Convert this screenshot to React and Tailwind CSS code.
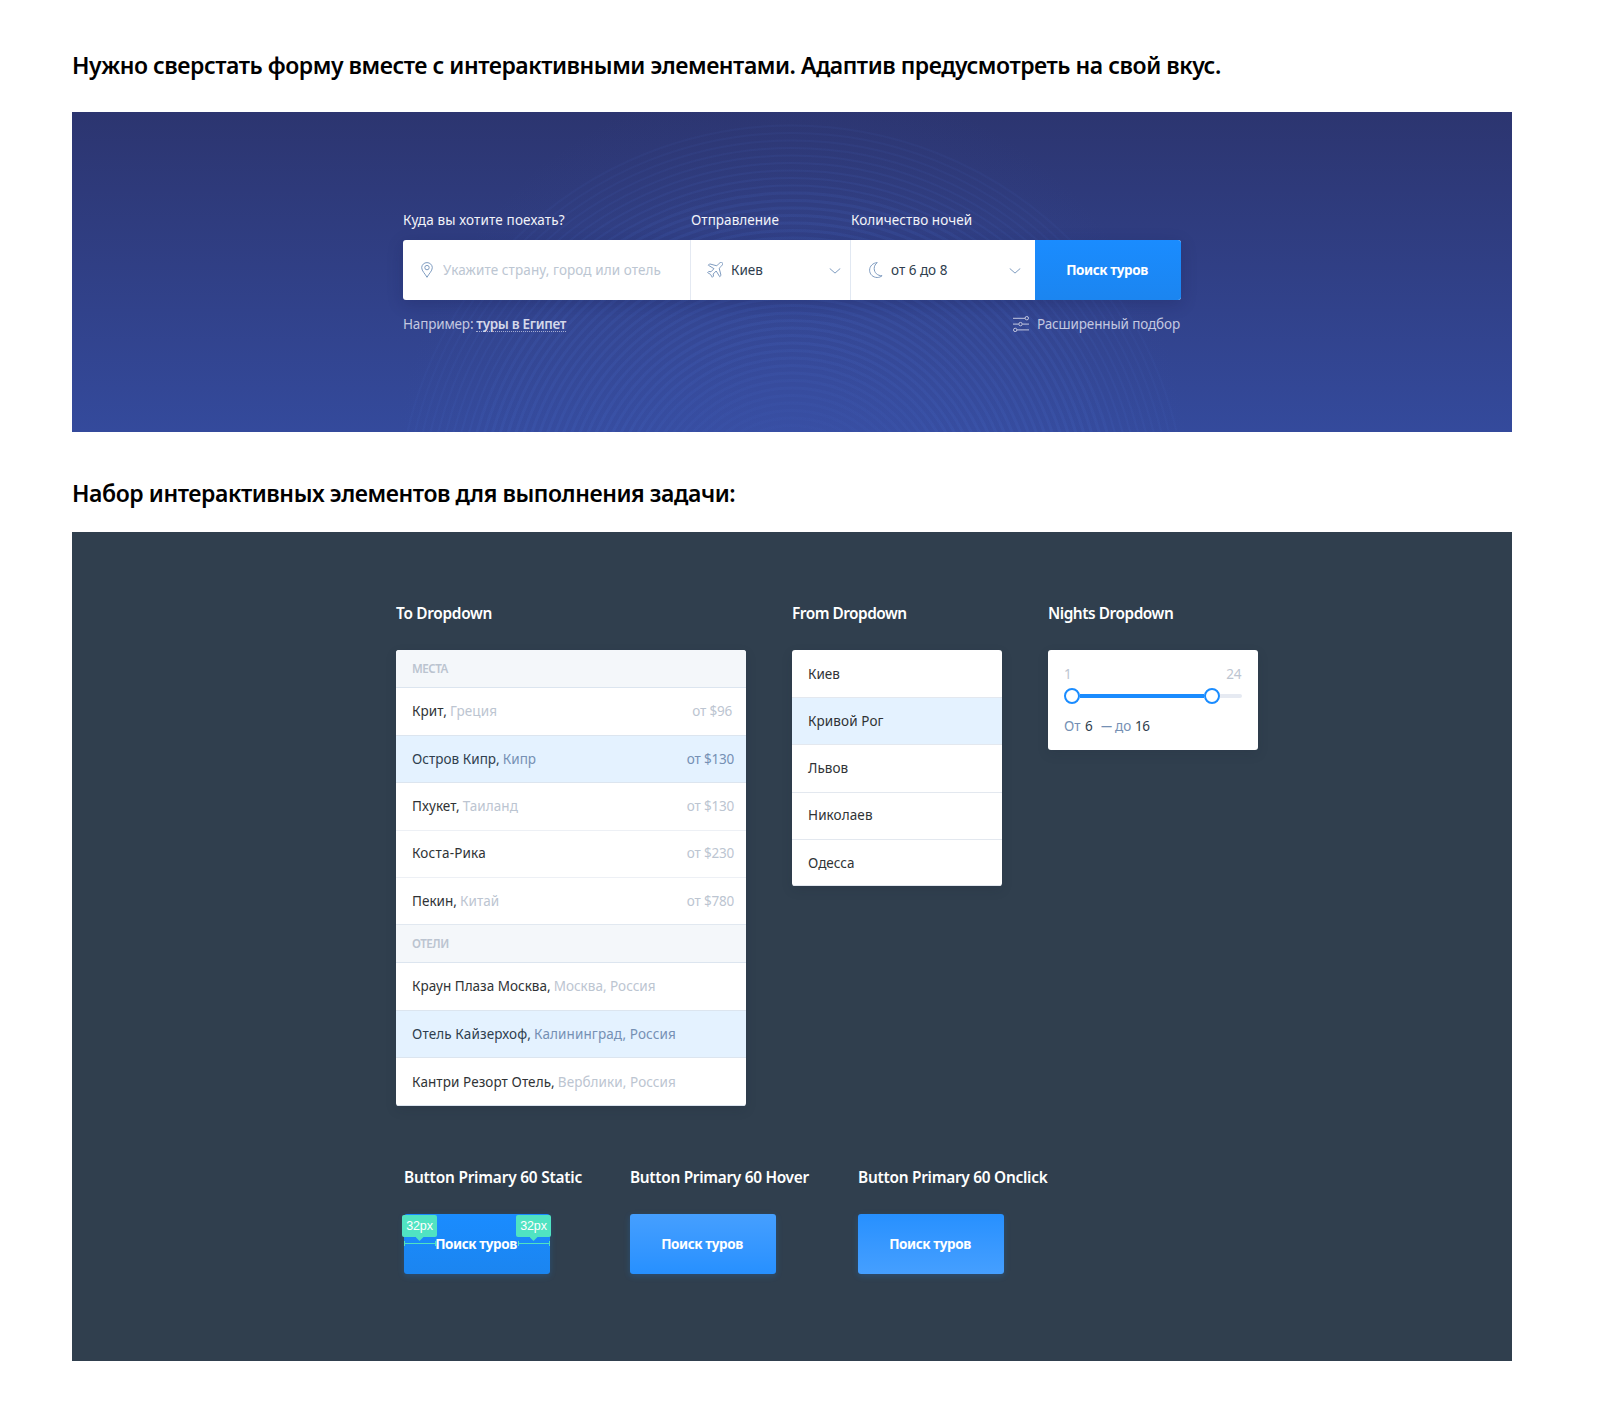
import clsx from "clsx";

const RINGS = Array.from({ length: 44 }, (_, i) => 72 + i * 7.5);

function Rings() {
  return (
    <svg className="absolute inset-0 h-full w-full" viewBox="0 0 1440 320" fill="none" aria-hidden="true">
      <defs>
        <radialGradient id="ringFade" gradientUnits="userSpaceOnUse" cx="720" cy="408" r="402">
          <stop offset="0.16" stopColor="#4a6fd0" stopOpacity="0" />
          <stop offset="0.45" stopColor="#4a6fd0" stopOpacity="0.14" />
          <stop offset="0.75" stopColor="#4a6fd0" stopOpacity="0.14" />
          <stop offset="1" stopColor="#4a6fd0" stopOpacity="0.06" />
        </radialGradient>
        <radialGradient id="glow" gradientUnits="userSpaceOnUse" cx="720" cy="360" r="400">
          <stop offset="0" stopColor="#4a63c4" stopOpacity="0.22" />
          <stop offset="1" stopColor="#4a63c4" stopOpacity="0" />
        </radialGradient>
      </defs>
      <rect width="1440" height="320" fill="url(#glow)" />
      {RINGS.map((r) => (
        <circle key={r} cx="720" cy="408" r={r} stroke="url(#ringFade)" strokeWidth={r > 330 ? 2 : 3} />
      ))}
    </svg>
  );
}

function PinIcon() {
  return (
    <svg className="h-4 w-3 shrink-0" viewBox="0 0 12 16" fill="none" stroke="#7f9cc0" strokeLinejoin="round">
      <path d="M6 15.3C4.3 12 .7 8.9.7 5.7a5.3 5.1 0 0 1 10.6 0c0 3.2-3.6 6.3-5.3 9.6z" />
      <circle cx="6" cy="5.6" r="2.2" />
    </svg>
  );
}

function PlaneIcon() {
  return (
    <svg className="size-4 shrink-0" viewBox="0 0 16 16" fill="none" stroke="#7f9cc0" strokeLinejoin="round">
      <path d="M15.3.7C14.5-.1 13 .5 12.2 1.3L9.8 3.8 2.6 1.9 1.3 3.2 7 6.7 4 9.8l-2.2-.4L.6 10.6l2.9 1.8 1.8 2.9 1.2-1.2-.3-2.1 3-3 3.5 5.7 1.3-1.3-1.8-7.2 2.5-2.4c.8-.8 1.4-2.3.6-3.1z" />
    </svg>
  );
}

function MoonIcon() {
  return (
    <svg className="h-4 w-3.5 shrink-0" viewBox="0 0 14 16" fill="none" stroke="#7f9cc0" strokeLinejoin="round">
      <path d="M8.3.6C3.9.9.6 4.1.6 8.2c0 4.1 3.4 7.3 7.6 7.3 1.9 0 3.6-.7 4.9-1.8-4.6.2-7.9-3-7.9-7.2 0-2.4 1.2-4.6 3.1-5.9z" />
    </svg>
  );
}

function Chevron() {
  return (
    <svg className="mt-0.5 h-1.5 w-3 shrink-0" viewBox="0 0 12 6" fill="none" stroke="#7f9cc0" strokeLinecap="round" strokeLinejoin="round">
      <path d="M1 .7l5 4.4L11 .7" />
    </svg>
  );
}

function SlidersIcon() {
  return (
    <svg className="size-4 shrink-0" viewBox="0 0 16 16" fill="none" stroke="#c4c8e0">
      <path d="M0 2.3h12M0 8.1h5.6M9.4 8.1H16M4 13.9h12" />
      <circle cx="13.8" cy="2.2" r="1.7" />
      <circle cx="7.5" cy="8.1" r="1.7" />
      <circle cx="2.2" cy="13.9" r="1.7" />
    </svg>
  );
}

function SearchForm() {
  return (
    <section className="relative h-80 overflow-hidden bg-linear-to-b from-[#2c3570] to-[#344a9c]">
      <Rings />
      <form className="relative mt-[98px] ml-[331px] w-[778px] text-[13.5px] leading-5" onSubmit={(e) => e.preventDefault()}>
        <div className="flex text-[#f2f3f9]">
          <label htmlFor="to" className="w-72 tracking-[0.15px]">Куда вы хотите поехать?</label>
          <span className="w-40 tracking-[0.04px]">Отправление</span>
          <span className="tracking-[0.08px]">Количество ночей</span>
        </div>
        <div className="mt-2.5 flex h-[60px] overflow-hidden rounded-[3px] bg-white text-[#2f3e4e] shadow-[0_4px_16px_rgba(20,25,70,0.22)]">
          <div className="flex w-72 items-center gap-2.5 border-r border-[#e4e9f2] pl-[18px]">
            <PinIcon />
            <input id="to" className="h-full min-w-0 flex-1 tracking-[0.1px] outline-none placeholder:text-[#bcc6d2]" placeholder="Укажите страну, город или отель" />
          </div>
          <button type="button" className="flex w-40 items-center border-r border-[#e1e8f2] pr-[9px] pl-4">
            <PlaneIcon />
            <span className="ml-2 flex-1 text-left">Киев</span>
            <Chevron />
          </button>
          <button type="button" className="flex w-46 items-center pr-3.5 pl-[18px]">
            <MoonIcon />
            <span className="ml-2 flex-1 text-left">от 6 до 8</span>
            <Chevron />
          </button>
          <button className="w-[146px] bg-linear-to-b from-[#1a8cff] to-[#1b85f0] pr-0.5 font-bold tracking-[-0.42px] text-white">Поиск туров</button>
        </div>
        <div className="mt-3.5 flex justify-between text-[#c4c8e0]">
          <p className="flex gap-[3px]">
            <span className="tracking-[-0.18px]">Например:</span>
            <a className="h-[18px] border-b border-dotted border-[#a3a9d0] font-semibold tracking-[-0.3px] text-[#d5d8ea]">туры в Египет</a>
          </p>
          <p className="flex items-center gap-2 pr-px">
            <SlidersIcon />
            <span className="tracking-[-0.13px]">Расширенный подбор</span>
          </p>
        </div>
      </form>
    </section>
  );
}

function Title({ children, className }) {
  return <h3 className={clsx("text-[15.4px] leading-6 font-semibold whitespace-nowrap text-white", className)}>{children}</h3>;
}

function GroupHeader({ children }) {
  return (
    <div className="flex h-[38px] items-center border-b border-[#dce5ef] bg-[#f4f7fa] px-4 text-[11.6px] font-semibold tracking-[-0.5px] text-[#bbc4d0]">
      {children}
    </div>
  );
}

const PLACES = [
  { name: "Крит,", place: "Греция", price: "от $96", row: "h-12 border-[#dce5ef] pr-3.5 tracking-[0.1px]" },
  { name: "Остров Кипр,", place: "Кипр", price: "от $130", row: "h-[47px] border-[#dce5ef] pr-3 tracking-[0.03px]", active: true },
  { name: "Пхукет,", place: "Таиланд", price: "от $130", row: "h-12 border-[#edf0f5] pr-3 tracking-[0.07px]" },
  { name: "Коста-Рика", price: "от $230", row: "h-[47px] border-[#edf0f5] pr-3 pb-px tracking-[0.2px]" },
  { name: "Пекин,", place: "Китай", price: "от $780", row: "h-[47px] border-[#e1e8f0] pr-3 tracking-[0.04px]" },
];

const HOTELS = [
  { name: "Краун Плаза Москва,", place: "Москва, Россия", row: "h-12 border-[#dce5ef] tracking-[0.01px]" },
  { name: "Отель Кайзерхоф,", place: "Калининград, Россия", row: "h-[47px] border-[#dce5ef] tracking-[0.12px]", active: true },
  { name: "Кантри Резорт Отель,", place: "Верблики, Россия", row: "h-12 border-[#dce5ef] pt-0.5 tracking-[0.08px]" },
];

const CITIES = [
  { name: "Киев", row: "h-12 pt-0.5" },
  { name: "Кривой Рог", row: "h-[47px] bg-[#e4f2ff] tracking-[0.1px]" },
  { name: "Львов", row: "h-12" },
  { name: "Николаев", row: "h-[47px] pb-0.5 tracking-[0.1px]" },
  { name: "Одесса", row: "h-[46px] pt-0.5" },
];

function Row({ name, place, price, row, active }) {
  return (
    <div className={clsx("flex items-center border-b pl-4", row, active ? "bg-[#e4f2ff] text-[#7590b4]" : "text-[#bcc5d1]")}>
      <span className={active ? "text-[#2f3e4e]" : "text-[#303336]"}>{name}</span>
      <span className="ml-[3px]">{place}</span>
      <span className="ml-auto tracking-[-0.2px]">{price}</span>
    </div>
  );
}

const CARD = "mt-6 overflow-hidden rounded-[3px] bg-white shadow-[0_4px_12px_rgba(25,35,50,0.12)]";

function ToDropdown() {
  return (
    <div className="w-[350px]">
      <Title className="tracking-[-0.3px]">To Dropdown</Title>
      <div className={CARD}>
        <GroupHeader>МЕСТА</GroupHeader>
        {PLACES.map((p) => <Row key={p.name} {...p} />)}
        <GroupHeader>ОТЕЛИ</GroupHeader>
        {HOTELS.map((p) => <Row key={p.name} {...p} />)}
      </div>
    </div>
  );
}

function FromDropdown() {
  return (
    <div className="w-[210px]">
      <Title className="tracking-[-0.5px]">From Dropdown</Title>
      <div className={CARD}>
        {CITIES.map((c) => (
          <div key={c.name} className={clsx("flex items-center border-b border-[#e3e8ef] px-4 text-[#303336]", c.row)}>{c.name}</div>
        ))}
      </div>
    </div>
  );
}

function Handle() {
  return <span className="size-4 shrink-0 rounded-full border-2 border-[#1a8cff] bg-white" />;
}

function NightsDropdown() {
  return (
    <div className="w-[210px]">
      <Title className="tracking-[-0.45px]">Nights Dropdown</Title>
      <div className={clsx(CARD, "h-[100px] px-4 pt-3.5 leading-5")}>
        <div className="flex justify-between pr-px text-[#bcc5d1]">
          <span>1</span>
          <span className="tracking-[-0.4px]">24</span>
        </div>
        <div className="mt-1 flex items-center">
          <Handle />
          <span className="h-1 w-[124px] bg-[#1a8cff]" />
          <Handle />
          <span className="h-1 flex-1 rounded-r-full bg-[#e6eaf2]" />
        </div>
        <div className="mt-3 flex text-[#7590b4]">
          <span className="w-[21px]">От</span>
          <span className="w-4 text-[#2f3e4e]">6</span>
          <span className="w-3.5 origin-left scale-x-[0.82]">—</span>
          <span className="w-5">до</span>
          <span className="tracking-[-0.4px] text-[#2f3e4e]">16</span>
        </div>
      </div>
    </div>
  );
}

function Measure({ className }) {
  return (
    <span className={clsx("absolute top-px flex w-[35px] flex-col items-center", className)}>
      <span className="h-[22px] w-full rounded-[2px] bg-[#50e3c2] text-center font-['Liberation_Sans'] text-[12.5px] leading-[22px] font-normal tracking-[-0.1px] text-white">32px</span>
      <span className="h-1 w-2 bg-[#50e3c2] [clip-path:polygon(0_0,100%_0,50%_100%)]" />
      <span className="flex h-[5px] w-8 items-center border-x border-[#50e3c2]">
        <span className="h-px w-full bg-[#50e3c2]" />
      </span>
    </span>
  );
}

function PrimaryButton({ title, tracking, look, width, measured }) {
  return (
    <div className={width}>
      <Title className={tracking}>{title}</Title>
      <button className={clsx("relative mt-6 block h-[60px] w-[146px] rounded-[3px] bg-linear-to-b pr-0.5 font-bold tracking-[-0.42px] text-white shadow-[0_2px_6px_rgba(26,140,255,0.22)]", look)}>
        Поиск туров
        {measured && <Measure className="-left-0.5" />}
        {measured && <Measure className="-right-px" />}
      </button>
    </div>
  );
}

export default function App() {
  return (
    <main className="h-[1424px] w-[1610px] bg-white px-[72px] pt-[49px] font-['Noto_Sans',sans-serif] text-[13.5px] text-black">
      <h1 className="text-[23px] leading-8 font-semibold tracking-[-0.466px]">Нужно сверстать форму вместе с интерактивными элементами. Адаптив предусмотреть на свой вкус.</h1>
      <div className="mt-[31px] w-[1440px]">
        <SearchForm />
      </div>
      <h2 className="mt-[45px] text-[23px] leading-8 font-semibold tracking-[-0.43px]">Набор интерактивных элементов для выполнения задачи:</h2>
      <section className="mt-[23px] h-[829px] w-[1440px] bg-[#303f4e] pt-[70px] pl-[324px]">
        <div className="flex items-start gap-[46px]">
          <ToDropdown />
          <FromDropdown />
          <NightsDropdown />
        </div>
        <div className="mt-[60px] ml-2 flex">
          <PrimaryButton title="Button Primary 60 Static" tracking="tracking-[-0.2px]" width="w-[226px]" look="from-[#1a8cff] to-[#1b85f0]" measured />
          <PrimaryButton title="Button Primary 60 Hover" tracking="tracking-[-0.3px]" width="w-[228px]" look="from-[#459fff] to-[#2690ff]" />
          <PrimaryButton title="Button Primary 60 Onclick" tracking="tracking-[-0.26px]" width="w-[228px]" look="from-[#2690ff] to-[#459fff]" />
        </div>
      </section>
    </main>
  );
}
